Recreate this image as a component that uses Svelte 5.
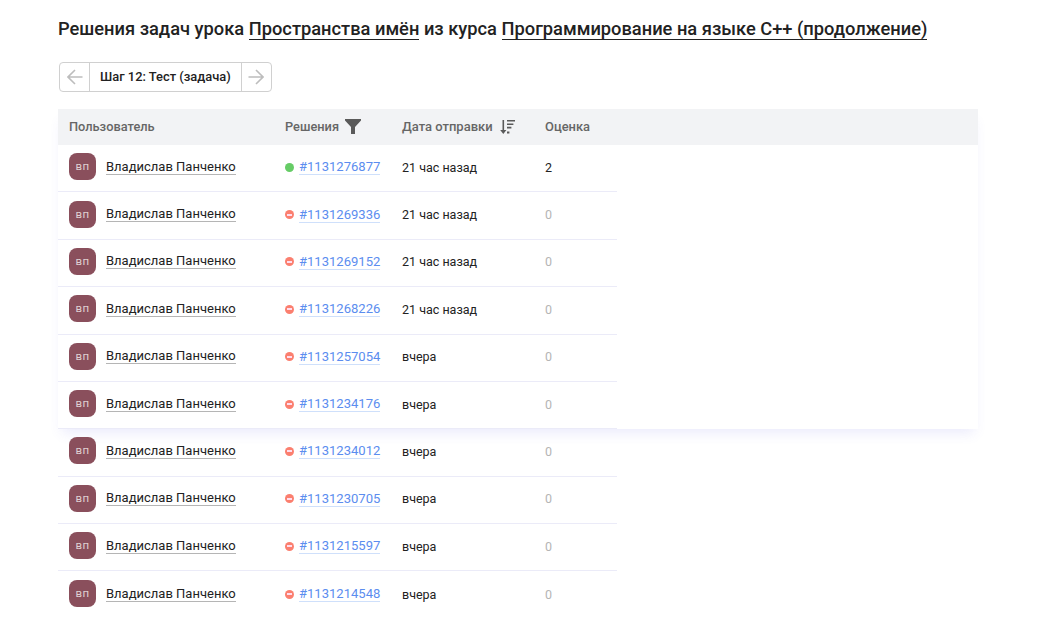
<script>
	const rows = [
		{ id: '1131276877', date: '21 час назад', score: 2, ok: true },
		{ id: '1131269336', date: '21 час назад', score: 0 },
		{ id: '1131269152', date: '21 час назад', score: 0 },
		{ id: '1131268226', date: '21 час назад', score: 0 },
		{ id: '1131257054', date: 'вчера', score: 0 },
		{ id: '1131234176', date: 'вчера', score: 0 },
		{ id: '1131234012', date: 'вчера', score: 0 },
		{ id: '1131230705', date: 'вчера', score: 0 },
		{ id: '1131215597', date: 'вчера', score: 0 },
		{ id: '1131214548', date: 'вчера', score: 0 }
	];
</script>

<div class="page">
	<h1>
		Решения задач урока <a href="#lesson">Пространства имён</a> из курса
		<a href="#course">Программирование на языке C++ (продолжение)</a>
	</h1>

	<div class="stepper">
		<button type="button" class="arrow" aria-label="Назад">
			<svg width="16" height="16" viewBox="0 0 16 16" fill="none" stroke="currentColor" stroke-width="1.6">
				<path d="M15.5 8H1M8 1 1 8l7 7" />
			</svg>
		</button>
		<span class="step">Шаг 12: Тест (задача)</span>
		<button type="button" class="arrow" aria-label="Вперёд">
			<svg width="16" height="16" viewBox="0 0 16 16" fill="none" stroke="currentColor" stroke-width="1.6">
				<path d="M.5 8H15M8 1l7 7-7 7" />
			</svg>
		</button>
	</div>

	<div class="list">
		<div class="panel"></div>
		<div class="head">
			<div class="cell-head user">Пользователь</div>
			<div class="cell-head sol">
				Решения
				<svg width="16" height="15" viewBox="0 0 16 15" fill="#5a5a5a">
					<path d="M0 0h16v1.6L10 8v7H6V8L0 1.6z" />
				</svg>
			</div>
			<div class="cell-head date">
				Дата отправки
				<svg width="15" height="14" viewBox="0 0 15 14" fill="#5a5a5a">
					<path d="M2.5 0h1.6v10H6.4L3.3 14 .2 10h2.3zM7 0h8v1.6H7zM7 3.4h6.4V5H7zM7 6.8h4.4v1.6H7zM7 11.6h2.4v1.8H7z" />
				</svg>
			</div>
			<div class="cell-head score">Оценка</div>
		</div>
		{#each rows as row}
			<div class="row">
				<div class="user">
					<span class="avatar">вп</span>
					<a class="name" href="#user">Владислав Панченко</a>
				</div>
				<div class="sol">
					<span class="status" class:ok={row.ok}></span>
					<a class="link" href="#solution">#{row.id}</a>
				</div>
				<div class="date">{row.date}</div>
				<div class="score" class:zero={row.score === 0}>{row.score}</div>
			</div>
		{/each}
	</div>
</div>

<style>
	:global(body) {
		margin: 0;
		background: #fff;
		font-family: Roboto, 'Noto Sans', sans-serif;
		color: #222;
		overflow: hidden;
	}
	.page {
		height: 617px;
		overflow: hidden;
		padding: 17px 63px 0 58px;
		box-sizing: border-box;
	}
	h1 {
		margin: 0;
		font-size: 18.3px;
		line-height: 24px;
		font-weight: 500;
		color: #222;
		white-space: nowrap;
	}
	h1 a {
		color: inherit;
		text-decoration: none;
		border-bottom: 1px solid #222;
	}
	.stepper {
		display: inline-flex;
		align-items: stretch;
		height: 28px;
		margin-top: 21px;
		margin-left: 1px;
		border: 1px solid #d0d0d0;
		border-radius: 4px;
		vertical-align: top;
	}
	.arrow {
		width: 29px;
		padding: 0;
		border: 0;
		background: none;
		color: #bdbdbd;
		display: flex;
		align-items: center;
		justify-content: center;
	}
	.step {
		display: flex;
		align-items: center;
		padding: 0 10px 2px;
		border-left: 1px solid #d0d0d0;
		border-right: 1px solid #d0d0d0;
		font-size: 12.9px;
		font-weight: 500;
		color: #222;
	}
	.list {
		position: relative;
		margin-top: 17px;
		width: 920px;
	}
	.panel {
		position: absolute;
		top: 0;
		left: 0;
		right: 0;
		height: 320px;
		background: #fff;
		box-shadow: 0 8px 12px -4px rgba(90, 90, 230, 0.12);
	}
	.head {
		position: relative;
		display: flex;
		align-items: center;
		height: 36px;
		background: #f2f3f5;
	}
	.cell-head {
		display: flex;
		align-items: center;
		gap: 6px;
		font-size: 12.8px;
		font-weight: 500;
		color: #666;
		padding-bottom: 1px;
	}
	.cell-head.date {
		font-size: 13px;
		gap: 7px;
	}
	.cell-head.score {
		font-size: 12.9px;
	}
	.row {
		position: relative;
		display: flex;
		align-items: center;
		width: 559px;
		height: 47.375px;
		padding-bottom: 2px;
		box-sizing: border-box;
		border-bottom: 1px solid #ebebf8;
		font-size: 13px;
	}
	.row:last-child {
		border-bottom: 0;
	}
	.user {
		width: 227px;
		padding-left: 11px;
		box-sizing: border-box;
		display: flex;
		align-items: center;
		gap: 10px;
	}
	.sol {
		width: 117px;
		display: flex;
		align-items: center;
	}
	.date {
		width: 143px;
		font-size: 12.5px;
	}
	.avatar {
		width: 27px;
		height: 27px;
		margin-top: -1px;
		border-radius: 8px;
		background: #8a4f5c;
		color: #dfcfd2;
		font-size: 11.5px;
		letter-spacing: 0.5px;
		line-height: 26px;
		text-align: center;
	}
	.name {
		color: #222;
		text-decoration: none;
		border-bottom: 1px solid #b5b5b5;
		line-height: 15px;
		margin-top: -1px;
	}
	.status {
		position: relative;
		width: 9px;
		height: 9px;
		border-radius: 50%;
		background: #fb7f6f;
		margin-right: 5px;
	}
	.status::after {
		content: '';
		position: absolute;
		left: 2px;
		right: 2px;
		top: 3.5px;
		height: 2px;
		background: #fde;
	}
	.status.ok {
		background: #66cc66;
	}
	.status.ok::after {
		display: none;
	}
	.link {
		color: #5b8def;
		text-decoration: none;
		border-bottom: 1px solid #cfe0fb;
		line-height: 15px;
		font-size: 13.05px;
	}
	.score {
		font-size: 12.5px;
	}
	.zero {
		color: #b5b5b5;
	}
</style>
